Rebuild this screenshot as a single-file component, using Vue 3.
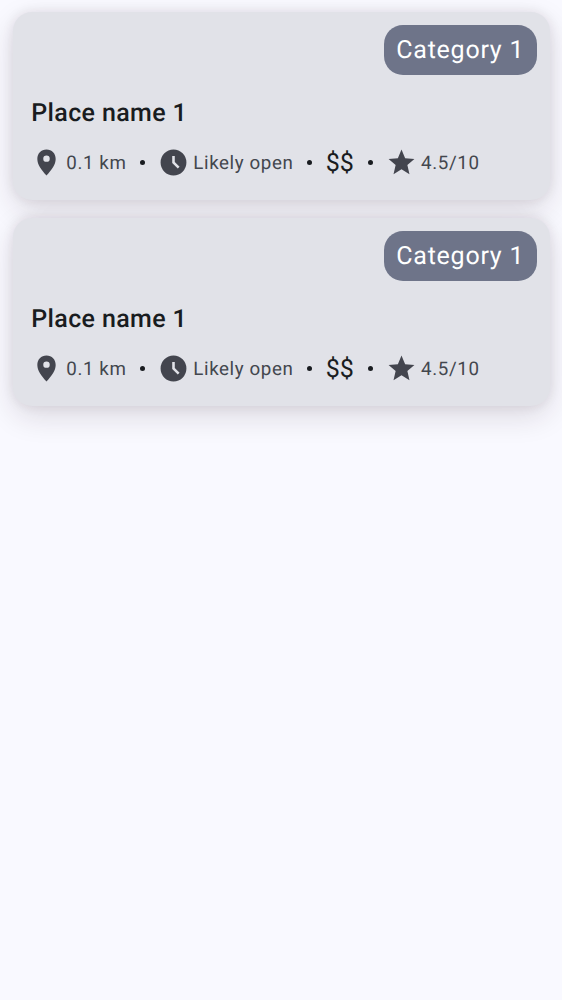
<script setup>
const places = [1, 2]
</script>

<template>
  <main class="screen">
    <article v-for="place in places" :key="place" class="card">
      <span class="category">Category 1</span>
      <h2>Place name 1</h2>
      <div class="details">
        <svg class="pin" viewBox="0 0 24 24"><path d="M12 2C7.8 2 4.9 5.2 4.9 9.2c0 4.4 3.1 8.3 7.1 12.8 4-4.5 7.1-8.4 7.1-12.8C19.1 5.2 16.2 2 12 2zm0 9.5a2.5 2.5 0 1 1 0-5 2.5 2.5 0 0 1 0 5z" /></svg>
        <span class="label distance">0.1 km</span>
        <i class="dot"></i>
        <svg class="clock" viewBox="0 0 24 24"><path d="M12 2a10 10 0 1 0 0 20 10 10 0 0 0 0-20zm3.3 14.7L11 12.4V7h2v4.6l3.7 3.7z" /></svg>
        <span class="label open">Likely open</span>
        <i class="dot"></i>
        <span class="price">$$</span>
        <i class="dot"></i>
        <svg class="star" viewBox="0 0 24 24"><path d="M12 17.27 18.18 21l-1.64-7.03L22 9.24l-7.19-.61L12 2 9.19 8.63 2 9.24l5.46 4.73L5.82 21z" /></svg>
        <span class="label rating">4.5/10</span>
      </div>
    </article>
  </main>
</template>

<style>
body { background: #f9f9ff; }
</style>

<style scoped>
.screen {
  box-sizing: border-box;
  min-height: 1000px;
  padding: 12px 12.5px 0;
  display: flex;
  flex-direction: column;
  gap: 18px;
  overflow: hidden;
  background: #f9f9ff;
  color: #191c20;
  font-family: Roboto, sans-serif;
  text-rendering: geometricPrecision;
}
.card {
  box-sizing: border-box;
  height: 188px;
  padding: 13px 12.5px 0 18.8px;
  display: flex;
  flex-direction: column;
  border-radius: 19px;
  background: #e1e2e8;
  box-shadow: 0 10px 30px rgba(45, 20, 35, .14), 0 0 12px rgba(45, 20, 35, .09);
}
.category {
  box-sizing: border-box;
  align-self: flex-end;
  width: 153.5px;
  height: 50px;
  padding-top: 1px;
  border-radius: 19px;
  background: #6e7489;
  color: #fff;
  text-align: center;
  font-size: 25px;
  line-height: 50px;
  letter-spacing: .75px;
  white-space: nowrap;
}
h2 {
  margin: 21px 0 0;
  font-size: 25px;
  line-height: 36px;
  font-weight: 500;
  letter-spacing: .36px;
}
.details {
  display: flex;
  align-items: center;
  height: 30px;
  margin-top: 15px;
  color: #43474e;
}
svg { width: 31px; height: 31px; fill: #43454e; flex: none; }
.label { flex: none; padding-top: 2px; font-size: 18.75px; letter-spacing: .6px; white-space: nowrap; }
.distance { width: 74px; margin-left: 4px; }
.open { width: 113.5px; margin-left: 4px; }
.dot { width: 5px; height: 5px; border-radius: 50%; background: #191c20; flex: none; }
.clock { margin-left: 13px; }
.price { padding-top: 2px; color: #191c20; font-size: 25px; width: 42.3px; margin-left: 14px; }
.star { margin-left: 13px; }
.rating { margin-left: 4px; }
</style>
